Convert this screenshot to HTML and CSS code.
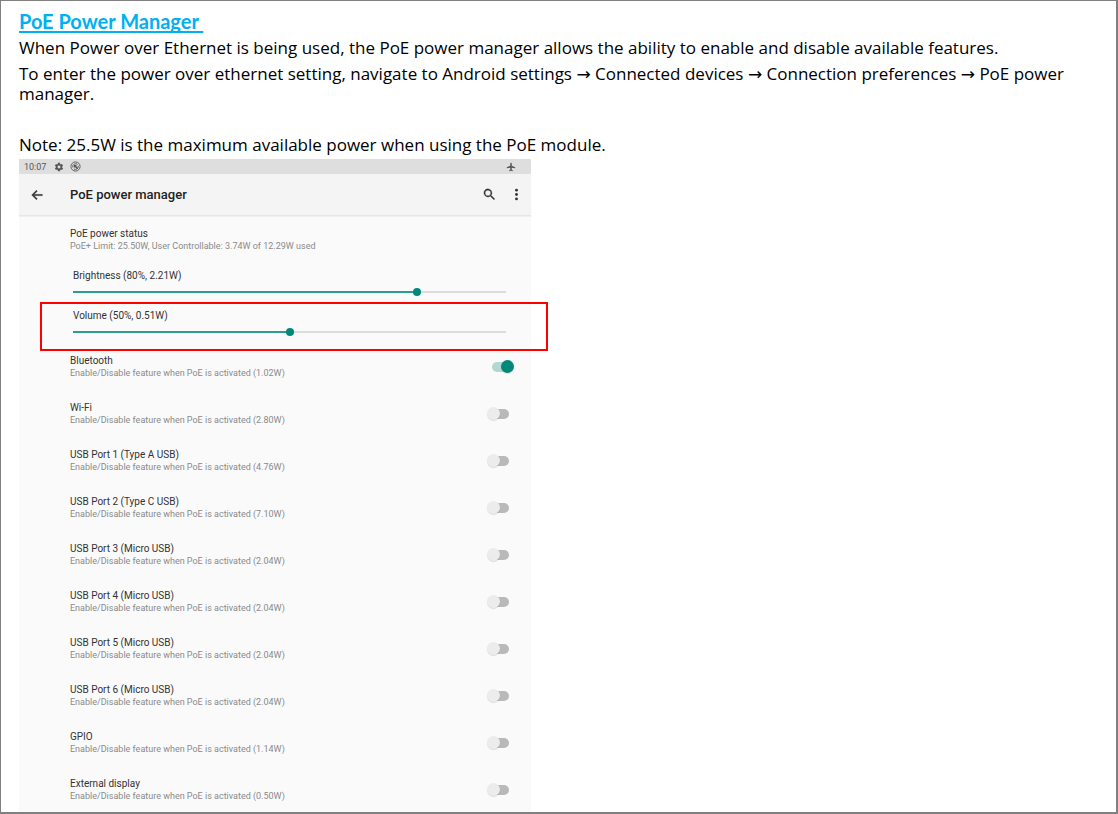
FILE: index.html
```html
<!DOCTYPE html>
<html lang="en">
<head>
  <meta charset="UTF-8">
  <title>PoE Power Manager</title>
  <meta name="viewport" content="width=device-width, initial-scale=1">
  <link rel="stylesheet" href="styles.css">
</head>
<body>
  <main class="doc">
    <h1>PoE Power Manager&nbsp;</h1>
    <p>When Power over Ethernet is being used, the PoE power manager allows the ability to enable and disable available features.</p>
    <p>To enter the power over ethernet setting, navigate to Android settings → Connected devices → Connection preferences → PoE power manager.</p>
    <p class="note">Note: 25.5W is the maximum available power when using the PoE module.</p>

    <section class="device">
      <div class="status-bar">
        <span>10:07</span>
        <svg width="10" height="10" viewBox="0 0 24 24"><path fill="currentColor" fill-rule="evenodd" d="M19.4 13a7.500 7.500 0 0 0 0-2l2.100-1.700a.5.5 0 0 0 .1-.6l-2-3.500a.5.5 0 0 0-.6-.2l-2.500 1a7.300 7.300 0 0 0-1.700-1l-.4-2.600A.5.5 0 0 0 14 2h-4a.5.5 0 0 0-.5.4L9.100 5a7.700 7.700 0 0 0-1.700 1l-2.500-1a.5.5 0 0 0-.6.2l-2 3.500a.5.5 0 0 0 .1.6L4.500 11a8 8 0 0 0 0 2l-2.100 1.700a.5.5 0 0 0-.1.6l2 3.500c.1.2.4.3.6.2l2.500-1c.5.4 1.100.7 1.700 1l.4 2.600c0 .2.2.4.5.4h4c.3 0 .5-.2.5-.4l.4-2.600a7.300 7.300 0 0 0 1.700-1l2.500 1c.2.1.5 0 .6-.2l2-3.500a.5.5 0 0 0-.1-.6zM12 15.500a3.500 3.500 0 1 1 0-7 3.500 3.500 0 0 1 0 7z"/></svg>
        <svg width="11" height="11" viewBox="0 0 24 24" fill="none" stroke="currentColor" stroke-width="2"><circle cx="12" cy="12" r="10"/><path d="M6 14a6.500 6.500 0 0 1 10.500-6.500M18 10.500a6.500 6.500 0 0 1-9.500 7"/><path stroke-width="3" d="M10 10l7 7M10 14v-4h4"/></svg>
        <svg class="plane" width="10" height="10" viewBox="0 0 24 24"><path fill="currentColor" d="M10.200 9V3.500a1.800 1.800 0 0 1 3.600 0V9L22 12.500v2.500l-8.200-1.500v5L16.500 20.500V22L12 21l-4.500 1v-1.500l2.700-2v-5L2 15v-2.500z"/></svg>
      </div>

      <header class="app-bar">
        <button type="button" aria-label="Back">
          <svg width="14" height="14" viewBox="0 0 24 24"><path fill="currentColor" stroke="currentColor" d="M21 11H6.800l5.600-5.600L11 4l-8 8 8 8 1.400-1.400L6.800 13H21z"/></svg>
        </button>
        <h2>PoE power manager</h2>
        <button type="button" aria-label="Search">
          <svg width="15" height="15" viewBox="0 0 24 24"><path fill="currentColor" stroke="currentColor" stroke-width=".5" d="M15.500 14h-.8l-.3-.3A6.500 6.500 0 1 0 13.700 14.400l.3.3v.8l5 5 1.500-1.500zm-6 0a4.500 4.500 0 1 1 0-9 4.500 4.500 0 0 1 0 9z"/></svg>
        </button>
        <button type="button" aria-label="More options">
          <svg width="15" height="15" viewBox="0 0 24 24" fill="currentColor"><circle cx="12" cy="5" r="2.300"/><circle cx="12" cy="12" r="2.300"/><circle cx="12" cy="19" r="2.300"/></svg>
        </button>
      </header>

      <div class="row">
        <div class="text">
          <span class="title">PoE power status</span>
          <span class="summary">PoE+ Limit: 25.50W, User Controllable: 3.74W of 12.29W used</span>
        </div>
      </div>

      <div class="slider">
        <label for="brightness">Brightness (80%, 2.21W)</label>
        <input type="range" id="brightness" value="80" style="--value: 80%">
      </div>
      <div class="slider highlighted">
        <label for="volume">Volume (50%, 0.51W)</label>
        <input type="range" id="volume" value="50" style="--value: 50%">
      </div>

      <div id="features"></div>
    </section>
  </main>
  <script>
    const features = [
      ["Bluetooth", "1.02W", true],
      ["Wi-Fi", "2.80W", false],
      ["USB Port 1 (Type A USB)", "4.76W", false],
      ["USB Port 2 (Type C USB)", "7.10W", false],
      ["USB Port 3 (Micro USB)", "2.04W", false],
      ["USB Port 4 (Micro USB)", "2.04W", false],
      ["USB Port 5 (Micro USB)", "2.04W", false],
      ["USB Port 6 (Micro USB)", "2.04W", false],
      ["GPIO", "1.14W", false],
      ["External display", "0.50W", false]
    ];

    const container = document.getElementById('features');

    features.forEach(([name, watts, on], i) => {
      const row = document.createElement('div');
      row.className = "row";
      row.innerHTML = `<label class="text" for="feature${i}">
          <span class="title">${name}</span>
          <span class="summary">Enable/Disable feature when PoE is activated (${watts})</span>
        </label>
        <input type="checkbox" class="switch" id="feature${i}"${on ? ' checked' : ''}>`;
      container.appendChild(row);
    });

    document.querySelectorAll('input[type="range"]').forEach(input => {
      input.addEventListener('input', () => {
        input.style.setProperty('--value', input.value + '%');
      });
    });
  </script>
</body>
</html>
```

FILE: styles.css
```css
* {
  box-sizing: border-box;
}
body {
  margin: 0;
  background: #fff;
  color: #000;
  font-family: "Century Gothic", "Open Sans", "DejaVu Sans", sans-serif;
}
.doc {
  display: flex;
  flex-direction: column;
  height: 100vh;
  overflow: hidden;
  padding: 10px 8px 0 18px;
  border: solid #808080;
  border-width: 1px 2px 2px 1px;
}
h1 {
  align-self: flex-start;
  margin: 0 0 7px;
  font-family: "Century Gothic", Lato, sans-serif;
  font-size: 20px;
  line-height: 20px;
  font-weight: 700;
  color: #00b0f0;
  text-decoration: underline;
  text-decoration-thickness: 2px;
  text-decoration-skip-ink: none;
  text-underline-offset: 2px;
}
p {
  margin: 0 0 6px;
  font-size: 17px;
  line-height: 20px;
}
.note {
  margin: 25px 0 4px;
}

.device {
  flex: 1 0 auto;
  width: 512px;
  background: #fafafa;
  font-family: Roboto, sans-serif;
  color: #333;
}
.status-bar {
  display: flex;
  align-items: center;
  gap: 6px;
  height: 15px;
  padding: 0 15px 0 5px;
  background: #dedede;
  color: #555;
  font-size: 9px;
}
.status-bar span {
  margin-right: 2px;
}
.plane {
  margin-left: auto;
}
.app-bar {
  display: flex;
  align-items: center;
  height: 42px;
  padding: 0 7px 0 11px;
  background: #f4f4f4;
  border-bottom: 1px solid #e6e6e6;
  box-shadow: 0 1px 1px #f0f0f0;
}
.app-bar h2 {
  flex: 1;
  margin: 0 0 0 26px;
  font-size: 13px;
  font-weight: 500;
  color: #222;
}
.app-bar button {
  display: flex;
  padding: 0;
  border: none;
  background: none;
  color: #333;
}
.app-bar button + button {
  margin-left: 12px;
}

.row {
  display: flex;
  align-items: center;
  height: 47px;
  padding: 0 17px 0 51px;
}
.text {
  flex: 1;
  display: flex;
  flex-direction: column;
}
.title,
.slider label {
  font-size: 10px;
  line-height: 13px;
}
.summary {
  font-size: 9px;
  line-height: 13px;
  color: #8a8a8a;
}

.slider {
  position: relative;
  display: flex;
  flex-direction: column;
  gap: 6px;
  height: 40px;
  padding: 6px 25px 0 54px;
}
/* callout frame, runs past the right edge of the device */
.highlighted::after {
  content: "";
  position: absolute;
  inset: -1px -17px -8px 21px;
  border: 2px solid #f00;
  pointer-events: none;
}
input[type="range"] {
  -webkit-appearance: none;
  appearance: none;
  width: 100%;
  height: 8px;
  margin: 0;
  background: none;
}
input[type="range"]::-webkit-slider-runnable-track {
  height: 2px;
  background: linear-gradient(90deg, #2a9d90 var(--value), #dcdcdc var(--value));
}
input[type="range"]::-webkit-slider-thumb {
  -webkit-appearance: none;
  width: 8px;
  height: 8px;
  margin-top: -3px;
  border-radius: 50%;
  background: #00897b;
}

.switch {
  -webkit-appearance: none;
  appearance: none;
  display: grid;
  align-items: center;
  width: 27px;
  height: 14px;
  margin: 0;
}
.switch::before,
.switch::after {
  content: "";
  grid-area: 1 / 1;
}
.switch::before {
  justify-self: center;
  width: 17px;
  height: 10px;
  border-radius: 5px;
  background: #b9b9b9;
}
.switch::after {
  width: 13px;
  height: 13px;
  border-radius: 50%;
  background: #ececec;
  box-shadow: 0 1px 1px rgba(0,0,0,0.12);
}
.switch:checked::before {
  background: #b2d8d3;
}
.switch:checked::after {
  justify-self: end;
  background: #00897b;
}
```
